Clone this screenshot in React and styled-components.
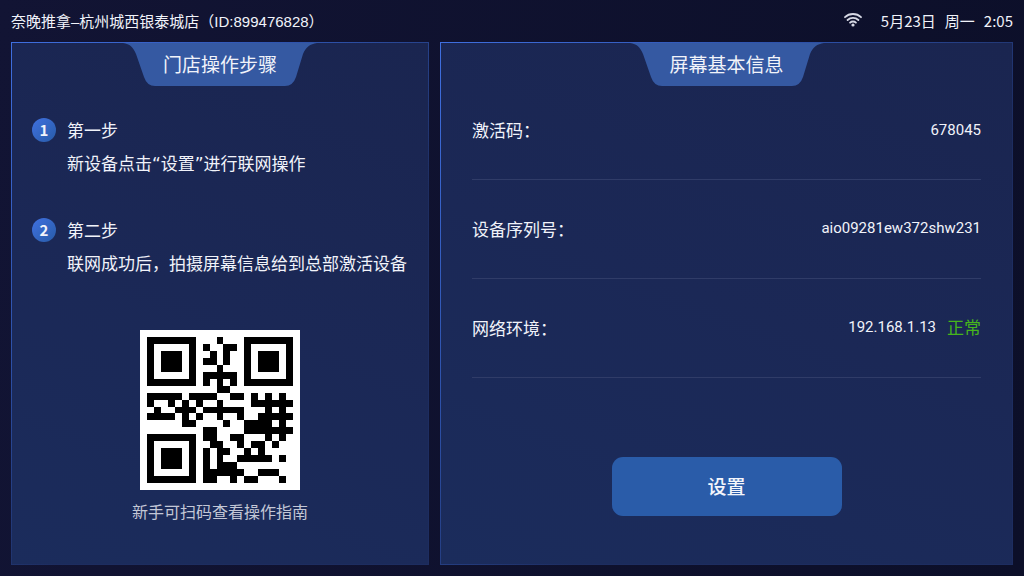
import styled, { createGlobalStyle } from "styled-components";

const GlobalStyle = createGlobalStyle`
   * {
      box-sizing: border-box;
   }

   body {
      margin: 0;
      background: linear-gradient(100deg, #121434, #0c0f29);
      color: #f1f3fa;
      font-family: "Noto Sans CJK SC", sans-serif;
   }
`

const Screen = styled.div`
   display: flex;
   flex-direction: column;
   min-height: 100vh;
   padding: 0 11px 11px;
`

const TopBar = styled.header`
   display: flex;
   align-items: center;
   justify-content: space-between;
   height: 42px;
   padding-bottom: 2px;
   font-size: 15px;
`

const Store = styled.span`
   font-family: "Liberation Sans", "Noto Sans CJK SC", sans-serif;
`

const Status = styled.div`
   display: flex;
   align-items: center;
   gap: 9px;

   svg {
      margin-right: 10px;
   }
`

const Panels = styled.main`
   display: grid;
   grid-template-columns: 418fr 573fr;
   gap: 11px;
   flex: 1;
`

const Panel = styled.section`
   display: flex;
   flex-direction: column;
   border: 1px solid;
   border-image: linear-gradient(135deg, #3f6fe0, #2c4fa5 35%, #1d2d60 60%) 1;
   background: linear-gradient(200deg, #1a2550, #1b2856 50%, #1b2c5c);
`

const Heading = styled.h2`
   display: grid;
   place-items: center;
   align-self: center;
   width: 194px;
   height: 43px;
   margin: 0;
   font-size: 19px;
   font-weight: 400;
   line-height: 41px;

   > * {
      grid-area: 1 / 1;
   }

   span {
      align-self: start;
   }
`

const Steps = styled.ol`
   display: flex;
   flex-direction: column;
   gap: 32px;
   margin: 0;
   padding: 27px 20px 0;
   list-style: none;
`

const StepItem = styled.li`
   display: grid;
   grid-template-columns: 24px 1fr;
   column-gap: 11px;
   align-items: center;
   font-size: 17px;
   line-height: 34px;
`

const Badge = styled.span`
   width: 24px;
   height: 24px;
   border-radius: 50%;
   background: linear-gradient(135deg, #4070e0, #285ca8);
   font-size: 15px;
   font-weight: 700;
   line-height: 24px;
   text-align: center;
`

const StepText = styled.span`
   grid-column: 2;
   font-family: "DejaVu Sans", "Noto Sans CJK SC", sans-serif;
   white-space: nowrap;
`

const Guide = styled.figure`
   display: flex;
   flex-direction: column;
   align-items: center;
   gap: 9px;
   margin: 49px 0 0;
`

const GuideCaption = styled.figcaption`
   color: #c3c7d6;
   font-size: 16px;
   line-height: 24px;
`

const InfoList = styled.dl`
   margin: 0;
   padding: 0 31px;
   font-size: 17px;
`

const InfoRow = styled.div`
   display: flex;
   align-items: center;
   justify-content: space-between;
   height: 99px;
   padding-bottom: 2px;
   border-bottom: 1px solid #303c68;

   &:first-child {
      height: 94px;
      padding-bottom: 6px;
   }
`

const InfoValue = styled.dd`
   display: flex;
   align-items: center;
   gap: 11px;
   margin: 0;
   font-family: Roboto, sans-serif;
   font-size: 15px;
   line-height: 24px;
`

const Online = styled.span`
   color: #46b51c;
   font-family: "Noto Sans CJK SC", sans-serif;
   font-size: 17px;
`

const SettingsButton = styled.button`
   align-self: center;
   width: 230px;
   height: 59px;
   margin-top: 79px;
   padding: 0 0 3px;
   border: 0;
   border-radius: 11px;
   background: #2a5ca9;
   color: #f4f6fc;
   font-family: inherit;
   font-size: 19px;
   font-weight: 500;
`

const QR_ROWS = [
   "111111100010001111111",
   "100000101001101000001",
   "101110100101001011101",
   "101110101101001011101",
   "101110100010001011101",
   "100000101111101000001",
   "111111101010101111111",
   "000000000011000000000",
   "111110111100110101010",
   "100101010010000111111",
   "010011101111110001010",
   "111101010010010011111",
   "000001100001001111010",
   "000000001100001111111",
   "111111101100110001010",
   "100000100110010110100",
   "101110101011001010000",
   "101110101010011111010",
   "101110101011100000000",
   "100000101111110011100",
   "111111101100101100010",
]

const QrCode = () => {
   const path = QR_ROWS.map((row, y) =>
      [...row].map((cell, x) => (cell === "1" ? `M${x} ${y}h1v1h-1z` : "")).join("")
   ).join("")

   return (
      <svg width="160" height="160" viewBox="-1 -1 23 23" shapeRendering="crispEdges" role="img" aria-label="操作指南">
         <path fill="#fff" d="M-1-1h23v23h-23z" />
         <path fill="#000" d={path} />
      </svg>
   )
}

const WifiIcon = () => (
   <svg width="18" height="14" viewBox="0 0 18 14" fill="none" stroke="#d6d8e4" strokeWidth="1.8" strokeLinecap="round">
      <path d="M1 4.2Q4.3 1 9 1T17 4.2M3.6 7Q5.8 4.8 9 4.8T14.4 7M6.1 9.7Q7.3 8.5 9 8.5T11.9 9.7" />
      <circle cx="9" cy="12" r="1.6" fill="#d6d8e4" stroke="none" />
   </svg>
)

const PanelHeading = ({ children }) => (
   <Heading>
      <svg width="194" height="43" viewBox="0 0 194 43" aria-hidden="true">
         <path
            fill="#3559a2"
            d="M0 0H194C187 1 183 4 180 11L173 34Q170 43 162 43H32Q24 43 21 34L13 11C10 4 7 1 0 0Z"
         />
      </svg>
      <span>{children}</span>
   </Heading>
)

const Step = ({ number, title, children }) => (
   <StepItem>
      <Badge>{number}</Badge>
      <span>{title}</span>
      <StepText>{children}</StepText>
   </StepItem>
)

const Info = ({ label, children }) => (
   <InfoRow>
      <dt>{label}</dt>
      <InfoValue>{children}</InfoValue>
   </InfoRow>
)

export default function App() {
   return (
      <Screen>
         <GlobalStyle />
         <TopBar>
            <Store>奈晚推拿–杭州城西银泰城店（ID:899476828）</Store>
            <Status>
               <WifiIcon />
               <span>5月23日</span>
               <span>周一</span>
               <span>2:05</span>
            </Status>
         </TopBar>

         <Panels>
            <Panel>
               <PanelHeading>门店操作步骤</PanelHeading>
               <Steps>
                  <Step number={1} title="第一步">新设备点击“设置”进行联网操作</Step>
                  <Step number={2} title="第二步">联网成功后，拍摄屏幕信息给到总部激活设备</Step>
               </Steps>
               <Guide>
                  <QrCode />
                  <GuideCaption>新手可扫码查看操作指南</GuideCaption>
               </Guide>
            </Panel>

            <Panel>
               <PanelHeading>屏幕基本信息</PanelHeading>
               <InfoList>
                  <Info label="激活码：">678045</Info>
                  <Info label="设备序列号：">aio09281ew372shw231</Info>
                  <Info label="网络环境：">
                     <span>192.168.1.13</span>
                     <Online>正常</Online>
                  </Info>
               </InfoList>
               <SettingsButton type="button">设置</SettingsButton>
            </Panel>
         </Panels>
      </Screen>
   )
}
